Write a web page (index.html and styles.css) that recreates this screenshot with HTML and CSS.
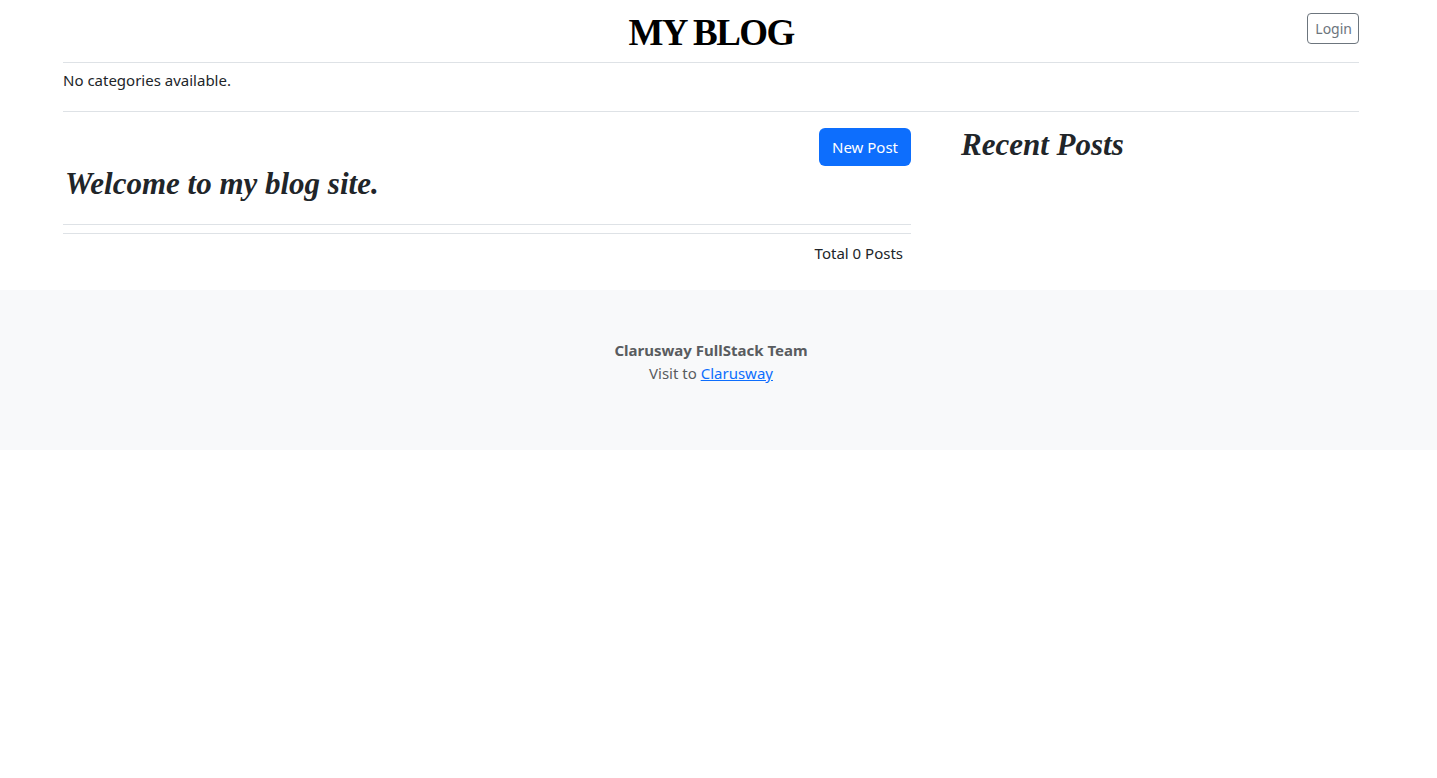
FILE: index.html
```html
<!DOCTYPE html>
<html lang="en">
<head>
<meta charset="utf-8">
<title>My Blog</title>
<link rel="stylesheet" href="styles.css">
</head>
<body>
<div class="container">
  <header class="site-header">
    <div class="header-side"></div>
    <a class="brand" href="#">MY BLOG</a>
    <div class="header-side header-right">
      <a class="btn-login" href="#">Login</a>
    </div>
  </header>
  <nav class="cat-nav">No categories available.</nav>
</div>
<main class="container">
  <div class="row">
    <div class="col-main">
      <div class="main-head">
        <div class="actions"><a class="btn-primary" href="#">New Post</a></div>
        <h3 class="welcome">Welcome to my blog site.</h3>
      </div>
      <hr class="divider">
      <div class="total">Total 0 Posts</div>
    </div>
    <div class="col-side">
      <h4 class="recent">Recent Posts</h4>
    </div>
  </div>
</main>
<footer class="site-footer">
  <p class="team">Clarusway FullStack Team</p>
  <p class="visit">Visit to <a href="#">Clarusway</a></p>
</footer>
</body>
</html>
```
FILE: styles.css
```css
* { box-sizing: border-box; }
html, body { margin: 0; padding: 0; }
body {
  font-family: "Noto Sans", "Liberation Sans", sans-serif;
  font-size: 16px;
  line-height: 1.5;
  color: #212529;
  background: #fff;
  padding-right: 15px;
}
.container {
  width: 1296px;
  margin: 0 auto;
}
.site-header {
  display: flex;
  align-items: center;
  height: 63px;
  border-bottom: 1px solid #dee2e6;
}
.header-side { flex: 1; }
.header-right { display: flex; justify-content: flex-end; }
.brand {
  font-family: "Liberation Serif", serif;
  font-weight: 700;
  font-size: 37px;
  letter-spacing: -1.6px;
  color: #000;
  text-decoration: none;
  line-height: 1;
  padding-top: 2px;
}
.btn-login {
  display: inline-block;
  font-size: 14px;
  line-height: 1.5;
  padding: 4px 6px 4px 7px;
  border: 1px solid #6c757d;
  border-radius: 4px;
  color: #6c757d;
  text-decoration: none;
  margin-top: -5px;
}
.cat-nav {
  padding: 6px 0 19px;
  font-size: 15px;
  border-bottom: 1px solid #dee2e6;
}
.row {
  display: flex;
  gap: 24px;
}
.col-main { width: 848px; }
.col-side { flex: 1; padding-left: 26px; }
.main-head {
  padding-top: 16px;
  padding-bottom: 22px;
  border-bottom: 1px solid #dee2e6;
}
.actions { display: flex; justify-content: flex-end; }
.btn-primary {
  display: inline-block;
  background: #0d6efd;
  color: #fff;
  text-decoration: none;
  font-size: 15px;
  line-height: 24px;
  padding: 7px 13px;
  border-radius: 6px;
}
.welcome, .recent {
  font-family: "Liberation Serif", serif;
  font-style: italic;
  font-weight: 700;
  font-size: 31px;
  line-height: 36px;
  margin: 0;
  color: #212529;
}
.welcome { padding-left: 2px; }
.recent { margin-top: 15px; }
.divider {
  margin: 8px 0 0;
  border: 0;
  border-top: 1px solid #dee2e6;
}
.total {
  text-align: right;
  padding: 8px 8px 26px 0;
  font-size: 15px;
}
.site-footer {
  background: #f8f9fa;
  height: 160px;
  padding-top: 49px;
  margin-right: -15px;
  padding-right: 15px;
  text-align: center;
  color: #595c5f;
  font-size: 15px;
}
.site-footer p { margin: 0; }
.team { font-weight: 700; }
.visit a { color: #0d6efd; }
```
